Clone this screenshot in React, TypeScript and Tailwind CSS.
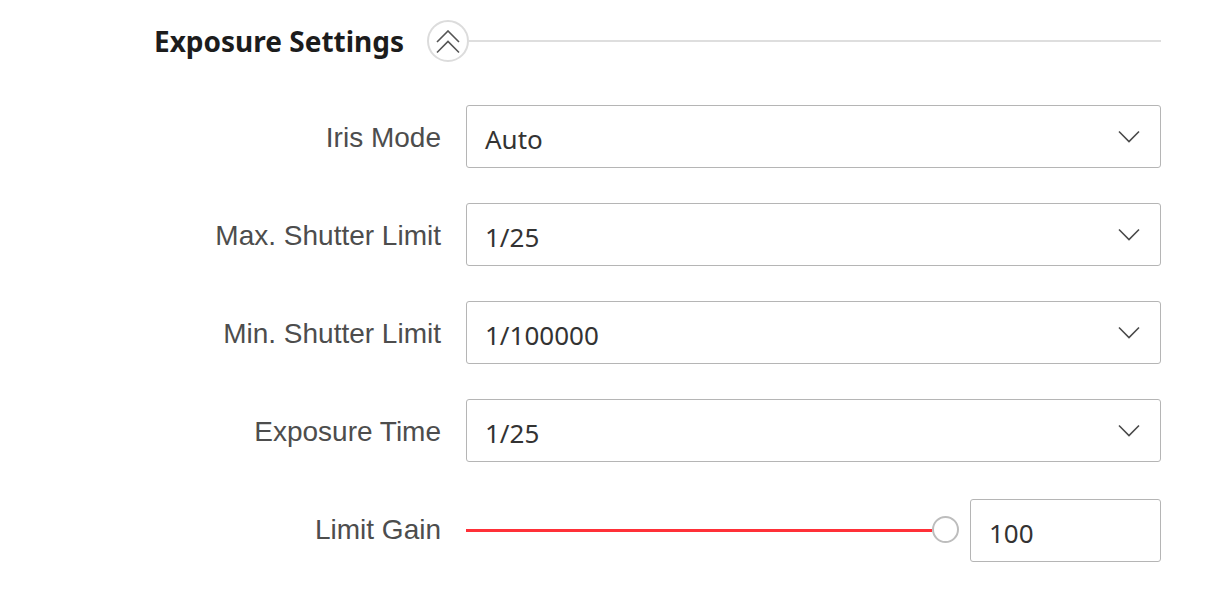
import React from "react";

const Chevron = () => (
  <svg width="22" height="13" viewBox="0 0 22 13" className="shrink-0">
    <path d="M1 1.5 L11 11.5 L21 1.5" fill="none" stroke="#4a4a4a" strokeWidth="1.6" />
  </svg>
);

const Row = ({ label, children, extra = "", labelExtra = "mt-[2px]" }: { label: string; children: React.ReactNode; extra?: string; labelExtra?: string }) => (
  <div className={`flex items-center h-[63px] ${extra}`}>
    <div className={`w-[287px] text-right text-[28px] text-[#4d4d4d] font-['Liberation_Sans',Arial,sans-serif] leading-none ${labelExtra}`}>
      {label}
    </div>
    <div className="ml-[25px] flex items-center">{children}</div>
  </div>
);

const Select = ({ value }: { value: string }) => (
  <div className="w-[695px] h-[63px] border border-[#b5b5b5] rounded-[3px] flex items-center justify-between pl-[18px] pr-[20px] bg-white">
    <span className="text-[26px] text-[#333] font-['Noto_Sans',sans-serif] leading-none mt-[5px]">{value}</span>
    <Chevron />
  </div>
);

export default function App() {
  return (
    <div className="w-[1228px] h-[596px] bg-white overflow-hidden pl-[154px] pt-[19px]">
      <div className="flex items-center h-[44px] w-[1007px]">
        <span className="text-[28px] font-bold text-[#1c1c1c] font-['Noto_Sans',sans-serif] leading-none">
          Exposure Settings
        </span>
        <div className="ml-[23px] w-[42px] h-[42px] rounded-full border-2 border-[#dcdcdc] flex items-center justify-center shrink-0">
          <svg width="24" height="24" viewBox="0 0 24 24" className="mt-[2px]">
            <path d="M1 12 L12 1 L23 12" fill="none" stroke="#555" strokeWidth="1.6" />
            <path d="M1 22.5 L12 11.5 L23 22.5" fill="none" stroke="#555" strokeWidth="1.6" />
          </svg>
        </div>
        <div className="flex-1 h-[2px] bg-[#dedede]" />
      </div>
      <div className="mt-[42px] flex flex-col gap-[35px]">
        <Row label="Iris Mode"><Select value="Auto" /></Row>
        <Row label="Max. Shutter Limit"><Select value="1/25" /></Row>
        <Row label="Min. Shutter Limit"><Select value="1/100000" /></Row>
        <Row label="Exposure Time"><Select value="1/25" /></Row>
        <Row label="Limit Gain" extra="mt-[2px]" labelExtra="-mt-[1px]">
          <div className="flex items-center">
            <div className="w-[466px] h-[3px] bg-[#ff3038]" />
            <div className="w-[27px] h-[27px] rounded-full border-2 border-[#bdbdbd] bg-white shrink-0 -mt-[2px]" />
            <div className="ml-[11px] w-[191px] h-[63px] border border-[#b5b5b5] rounded-[3px] flex items-center pl-[18px] bg-white">
              <span className="text-[26px] text-[#333] font-['Noto_Sans',sans-serif] leading-none mt-[5px]">100</span>
            </div>
          </div>
        </Row>
      </div>
    </div>
  );
}
